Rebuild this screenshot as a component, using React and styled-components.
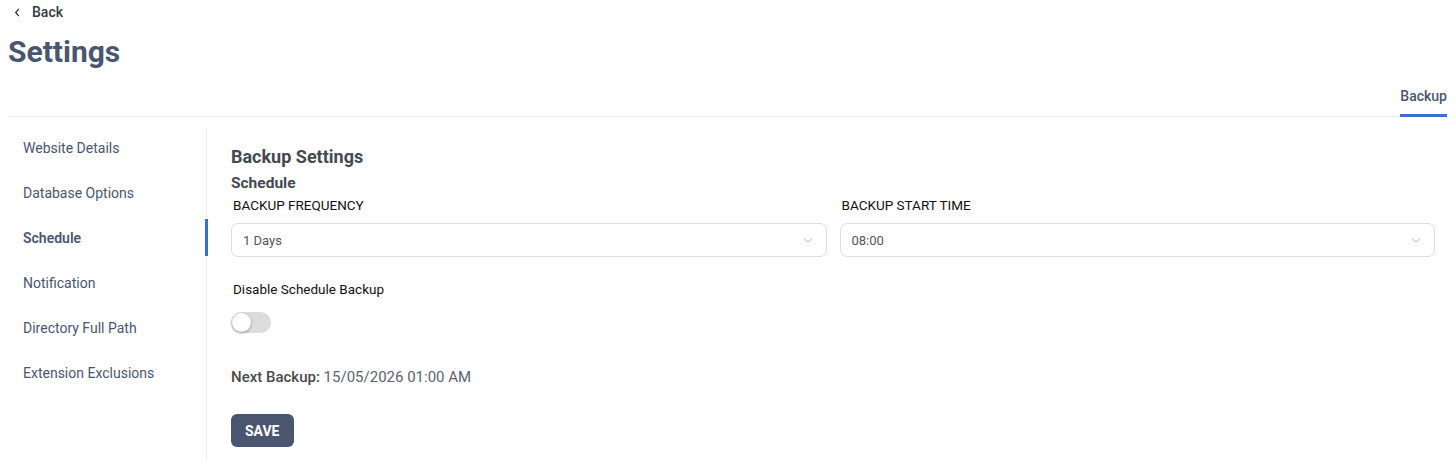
import React, { useState } from 'react';
import styled, { createGlobalStyle } from 'styled-components';

const GlobalStyle = createGlobalStyle`
  body {
    margin: 0;
    background: #fff;
    font-family: Roboto, "Noto Sans", sans-serif;
  }
`;

const Page = styled.div`
  padding: 0 9px 0 8px;
  width: 1456px;
  height: 460px;
  box-sizing: border-box;
  overflow: hidden;
`;

const BackLink = styled.a`
  display: flex;
  align-items: center;
  gap: 9px;
  height: 24px;
  padding-left: 4px;
  color: #333a45;
  font-size: 14px;
  font-weight: 500;
  text-decoration: none;
  cursor: pointer;
`;

const Title = styled.h1`
  margin: 10px 0 0;
  font-size: 30px;
  line-height: 36px;
  font-weight: 700;
  color: #4a5670;
`;

const TabBar = styled.div`
  display: flex;
  justify-content: flex-end;
  margin-top: 18px;
  border-bottom: 1px solid #e8e9f0;
`;

const Tab = styled.div`
  padding: 0 0 10px;
  font-size: 14px;
  font-weight: 500;
  color: #4a5670;
  border-bottom: 3px solid ${p => (p.$active ? '#3670d0' : 'transparent')};
  margin-bottom: -1px;
`;

const Body = styled.div`
  display: flex;
  margin-top: 11px;
`;

const Sidebar = styled.nav`
  width: 198px;
  flex-shrink: 0;
  border-right: 1px solid #eeeef3;
  padding-top: 1px;
  min-height: 340px;
`;

const NavItem = styled.div`
  display: flex;
  align-items: center;
  height: 37px;
  margin-bottom: 8px;
  padding-left: 15px;
  font-size: 14px;
  font-weight: ${p => (p.$active ? 600 : 400)};
  color: #4a5670;
  border-right: 3px solid ${p => (p.$active ? '#3670d0' : 'transparent')};
  margin-right: -2px;
  cursor: pointer;
`;

const Content = styled.section`
  flex: 1;
  padding: 18px 12px 0 24px;
`;

const Heading = styled.h2`
  margin: 0;
  font-size: 18px;
  line-height: 22px;
  font-weight: 700;
  color: #444a52;
`;

const SubHeading = styled.h3`
  margin: 6px 0 0;
  font-size: 15.5px;
  line-height: 18px;
  font-weight: 700;
  color: #444a52;
`;

const FieldRow = styled.div`
  display: grid;
  grid-template-columns: 1fr 1fr;
  column-gap: 13px;
`;

const Field = styled.div`
  display: flex;
  flex-direction: column;
`;

const Label = styled.label`
  display: block;
  margin: 5px 0 10px 2px;
  font-size: 13.5px;
  line-height: 16px;
  color: #111;
`;

const SelectBox = styled.div`
  display: flex;
  align-items: center;
  justify-content: space-between;
  height: 34px;
  box-sizing: border-box;
  padding: 0 12px 0 11px;
  border: 1px solid #dedede;
  border-radius: 7px;
  font-size: 13px;
  color: #555;
  background: #fff;
`;

const ToggleLabel = styled(Label)`
  margin: 24px 0 0 2px;
`;

const Switch = styled.button`
  position: relative;
  display: block;
  width: 40px;
  height: 21px;
  margin-top: 15px;
  padding: 0;
  border: none;
  border-radius: 11px;
  background: ${p => (p.$on ? '#4a5670' : '#dcdcdc')};
  cursor: pointer;

  &::after {
    content: '';
    position: absolute;
    top: 1px;
    left: ${p => (p.$on ? '20px' : '1px')};
    width: 19px;
    height: 19px;
    border-radius: 50%;
    background: #fff;
    box-shadow: 0 1px 3px rgba(0, 0, 0, 0.35);
  }
`;

const NextBackup = styled.p`
  margin: 35px 0 0;
  font-size: 15px;
  line-height: 18px;
  color: #4a4a4a;
  font-weight: 500;

  span {
    color: #5c6270;
    font-weight: 400;
  }
`;

const SaveButton = styled.button`
  display: block;
  margin-top: 28px;
  height: 33px;
  padding: 0 14px;
  border: none;
  border-radius: 6px;
  background: #4a5670;
  color: #fff;
  font-family: inherit;
  font-size: 14px;
  font-weight: 700;
  cursor: pointer;
`;

const Chevron = ({ size = 12, dir = 'down' }) => (
  <svg width={size} height={size} viewBox="0 0 12 12" fill="none">
    {dir === 'down' ? (
      <path d="M2 4.5l4 3.5 4-3.5" stroke="#b4b4b4" strokeWidth="1" />
    ) : (
      <path d="M7.5 2L4 6l3.5 4" stroke="#333" strokeWidth="1.4" />
    )}
  </svg>
);

const menu = [
  'Website Details',
  'Database Options',
  'Schedule',
  'Notification',
  'Directory Full Path',
  'Extension Exclusions',
];

export default function App() {
  const [disabled, setDisabled] = useState(false);

  return (
    <Page>
      <GlobalStyle />
      <BackLink>
        <Chevron size={11} dir="left" />
        Back
      </BackLink>
      <Title>Settings</Title>
      <TabBar>
        <Tab $active>Backup</Tab>
      </TabBar>
      <Body>
        <Sidebar>
          {menu.map(item => (
            <NavItem key={item} $active={item === 'Schedule'}>
              {item}
            </NavItem>
          ))}
        </Sidebar>
        <Content>
          <Heading>Backup Settings</Heading>
          <SubHeading>Schedule</SubHeading>
          <FieldRow>
            <Field>
              <Label>BACKUP FREQUENCY</Label>
              <SelectBox>
                1 Days
                <Chevron />
              </SelectBox>
            </Field>
            <Field>
              <Label>BACKUP START TIME</Label>
              <SelectBox>
                08:00
                <Chevron />
              </SelectBox>
            </Field>
          </FieldRow>
          <ToggleLabel>Disable Schedule Backup</ToggleLabel>
          <Switch $on={disabled} onClick={() => setDisabled(!disabled)} />
          <NextBackup>
            Next Backup: <span>15/05/2026 01:00 AM</span>
          </NextBackup>
          <SaveButton>SAVE</SaveButton>
        </Content>
      </Body>
    </Page>
  );
}
